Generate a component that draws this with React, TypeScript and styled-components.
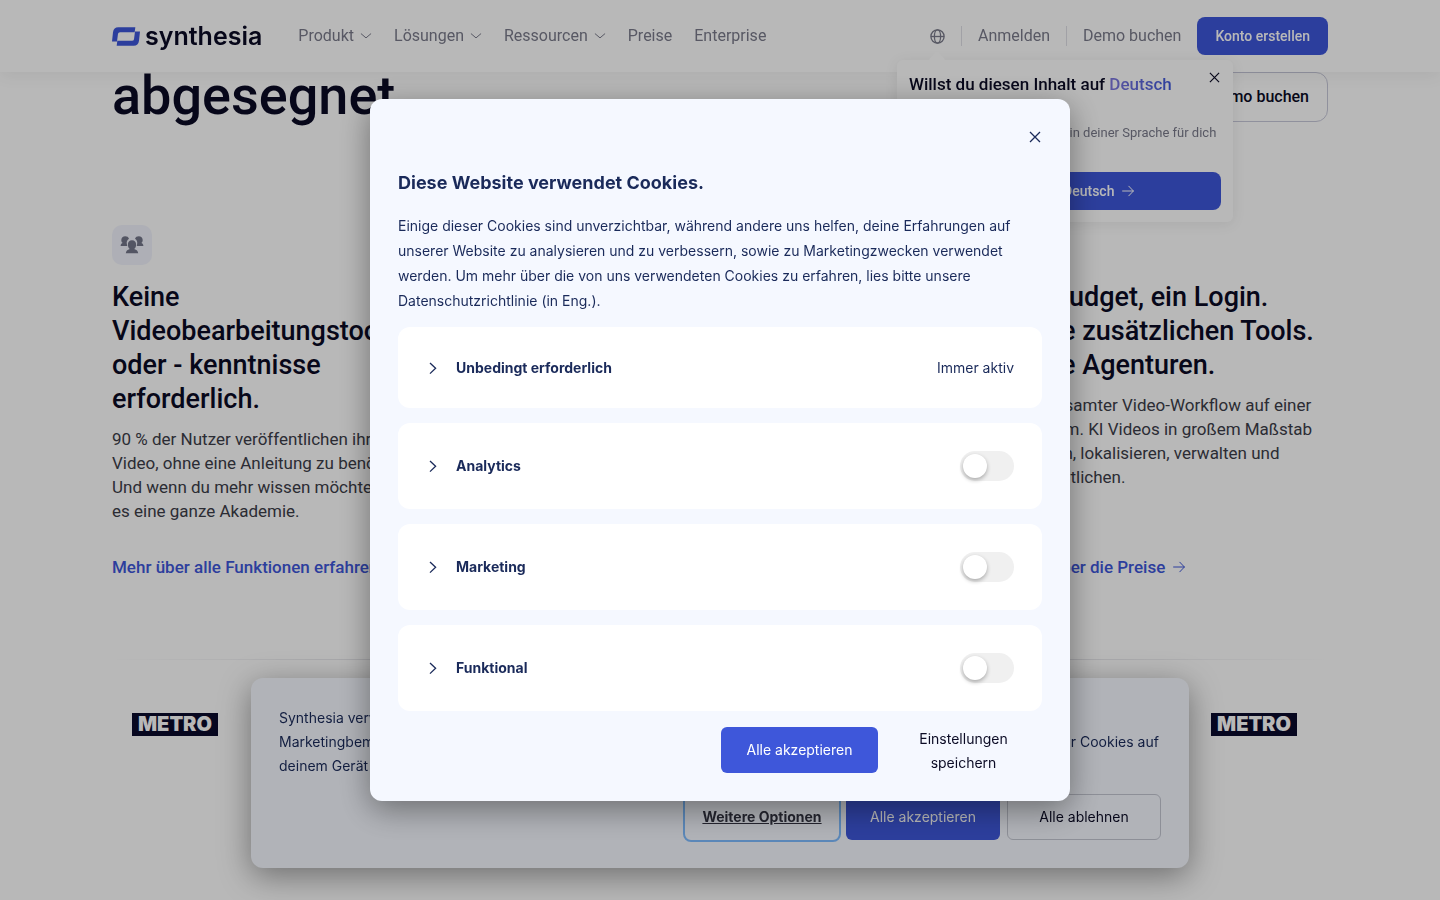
import React from "react";
import styled, { createGlobalStyle, css } from "styled-components";

const ui = `Roboto, "Liberation Sans", sans-serif`;
const inter = `Inter, "Liberation Sans", sans-serif`;

const color = {
  ink: "#0b0b25",
  text: "#3c3d49",
  muted: "#7a7b8b",
  navy: "#1a2a5a",
  blue: "#3e57da",
  panel: "#f5f8ff",
};

const GlobalStyle = createGlobalStyle`
  *, *::before, *::after { box-sizing: border-box; }
  body { margin: 0; background: #fff; font-family: ${ui}; color: ${color.ink}; overflow: hidden; }
  h1, h2, h3, p { margin: 0; }
  button { font-family: inherit; margin: 0; padding: 0; border: 0; background: none; cursor: pointer; }
  a { color: inherit; text-decoration: none; }
`;

/* ---------- header ---------- */

const Header = styled.header`
  position: fixed;
  inset: 0 0 auto;
  z-index: 2;
  height: 72px;
  padding: 0 112px;
  display: flex;
  align-items: center;
  background: #fff;
  box-shadow: 0 4px 16px rgba(0, 0, 0, 0.06);
`;

const Brand = styled.a`
  display: flex;
  align-items: center;
  gap: 5px;
  margin-right: 36px;
  font: 600 25px/32px ${inter};
  color: ${color.ink};
`;

const Nav = styled.nav`
  display: flex;
  align-items: center;
  gap: 22px;
  flex: 1;
`;

const navText = css`
  font: 400 16px/24px ${ui};
  color: ${color.muted};
  white-space: nowrap;
`;

const NavLink = styled.a`
  ${navText}
`;

const NavButton = styled.button`
  ${navText}
  display: flex;
  align-items: center;
  gap: 6px;
`;

const Account = styled.div`
  display: flex;
  align-items: center;
  gap: 16px;
`;

const Separator = styled.span`
  width: 1px;
  height: 20px;
  background: #e0e0e6;
`;

const LanguageAnchor = styled.div`
  position: relative;
  display: flex;
  color: ${color.muted};
`;

const IconButton = styled.button`
  display: flex;
  align-items: center;
  justify-content: center;
  color: inherit;
`;

const SignUp = styled.a`
  padding: 7px 18px;
  border-radius: 8px;
  background: ${color.blue};
  color: #fff;
  font: 500 14px/24px ${ui};
  white-space: nowrap;
`;

/* ---------- language popover ---------- */

const Popover = styled.div`
  position: absolute;
  top: 31px;
  left: -33px;
  width: 336px;
  padding: 12px;
  border-radius: 6px;
  background: #fff;
  box-shadow: 0 2px 14px rgba(0, 0, 0, 0.08);

  &::before {
    content: "";
    position: absolute;
    top: -6px;
    left: 34px;
    width: 12px;
    height: 12px;
    background: #fff;
    border-radius: 2px;
    transform: rotate(45deg);
  }
`;

const PopoverClose = styled(IconButton)`
  position: absolute;
  top: 10px;
  right: 10px;
  width: 16px;
  height: 16px;
  color: ${color.ink};
`;

const PopoverTitle = styled.p`
  font: 500 17px/24px ${ui};
  color: ${color.ink};
`;

const Language = styled.span`
  background: linear-gradient(90deg, #8078de, ${color.blue});
  -webkit-background-clip: text;
  background-clip: text;
  color: transparent;
`;

const PopoverText = styled.p`
  margin-top: 4px;
  font: 400 13px/18px ${ui};
  color: ${color.muted};
  white-space: nowrap;
`;

const PopoverAction = styled.button`
  display: flex;
  align-items: center;
  justify-content: center;
  gap: 8px;
  width: 100%;
  height: 38px;
  margin-top: 12px;
  border-radius: 8px;
  background: ${color.blue};
  color: #fff;
  font: 500 14px/24px ${ui};
`;

/* ---------- page ---------- */

const Main = styled.main`
  padding: 64px 112px 0;
`;

const Hero = styled.section`
  display: flex;
  justify-content: space-between;
  align-items: flex-start;
  height: 161px;
`;

const HeroTitle = styled.h1`
  font: 500 54px/64px ${ui};
  color: ${color.ink};
`;

const HeroLink = styled.a`
  margin-top: 8px;
  padding: 12px 18px;
  border: 1px solid #c8c9da;
  border-radius: 12px;
  font: 500 16px/24px ${ui};
  color: ${color.ink};
`;

const Features = styled.section`
  display: grid;
  grid-template-columns: repeat(2, minmax(0, 320px));
  justify-content: space-between;
`;

const Feature = styled.article`
  display: flex;
  flex-direction: column;
`;

const FeatureIcon = styled.span`
  display: flex;
  align-items: center;
  justify-content: center;
  width: 40px;
  height: 40px;
  margin-bottom: 15px;
  border-radius: 10px;
  background: #f1f3fc;
  color: #74768a;
`;

const FeatureTitle = styled.h3`
  margin-bottom: 11px;
  font: 500 27px/34px ${ui};
  color: ${color.ink};
`;

const FeatureText = styled.p`
  margin-bottom: 32px;
  font: 400 17px/24px ${ui};
  color: ${color.text};
  white-space: pre-line;
`;

const FeatureLink = styled.a`
  display: flex;
  align-items: center;
  gap: 8px;
  margin-top: auto;
  font: 500 17px/24px ${ui};
  color: ${color.blue};
  white-space: nowrap;
`;

const Rule = styled.hr`
  height: 1px;
  margin: 80px 0 53px;
  border: 0;
  background: linear-gradient(90deg, transparent, #dcdce2 30%, #dcdce2 70%, transparent);
`;

const Logos = styled.div`
  display: flex;
  justify-content: space-between;
  padding: 0 31px 0 20px;
`;

const MetroLogo = styled.span`
  padding: 0 6px;
  background: #0a0a2c;
  color: #fff;
  font: 900 20px/23px ${inter};
`;

/* ---------- cookie banner ---------- */

const Banner = styled.section`
  position: fixed;
  z-index: 3;
  bottom: 32px;
  left: 50%;
  width: 938px;
  max-width: calc(100% - 48px);
  transform: translateX(-50%);
  padding: 28px;
  border-radius: 12px;
  background: ${color.panel};
  box-shadow: 0 8px 32px rgba(0, 0, 0, 0.4);
  font: 400 14px/24px ${inter};
  color: ${color.navy};
`;

const BannerActions = styled.div`
  display: flex;
  justify-content: flex-end;
  gap: 7px;
  margin-top: 16px;
`;

const Action = styled.button<{ $kind?: "primary" | "outline" | "focused" | "plain"; $wide?: boolean }>`
  width: ${(p) => (p.$wide ? 157 : 154)}px;
  min-height: 46px;
  border-radius: 6px;
  font: 400 14px/24px ${inter};
  color: ${color.ink};

  ${(p) => p.$kind === "primary" && css`background: ${color.blue}; color: #fff;`}
  ${(p) => p.$kind === "outline" && css`border: 1px solid #c4c7d2;`}
  ${(p) => p.$kind === "plain" && css`padding: 0 24px;`}
  ${(p) =>
    p.$kind === "focused" &&
    css`
      outline: 2px solid #7fbcff;
      font-weight: 700;
      color: #333442;
      text-decoration: underline;
    `}
`;

/* ---------- preferences dialog ---------- */

const Backdrop = styled.div`
  position: fixed;
  inset: 0;
  z-index: 4;
  display: grid;
  place-items: center;
  background: rgba(0, 0, 0, 0.28);
`;

const Dialog = styled.section`
  width: 700px;
  max-width: calc(100% - 32px);
  padding: 24px 28px 26px;
  border-radius: 12px;
  background: ${color.panel};
  box-shadow: 0 8px 32px rgba(0, 0, 0, 0.4);
  font: 400 14px/25px ${inter};
  color: ${color.navy};
`;

const DialogClose = styled(IconButton)`
  width: 14px;
  height: 28px;
  margin-left: auto;
`;

const DialogTitle = styled.h2`
  margin: 18px 0 16px;
  font: 700 18px/28px ${inter};
`;

const Categories = styled.div`
  display: flex;
  flex-direction: column;
  gap: 15px;
  margin: 14px 0 16px;
`;

const Category = styled.div`
  display: flex;
  align-items: center;
  justify-content: space-between;
  min-height: 81px;
  padding: 28px;
  border-radius: 12px;
  background: #fff;
  line-height: 24px;
`;

const Disclosure = styled.button`
  display: flex;
  align-items: center;
  gap: 16px;
  font: 700 14px/24px ${inter};
  color: ${color.navy};
`;

const Toggle = styled.input`
  appearance: none;
  width: 54px;
  height: 30px;
  margin: 0;
  padding: 3px;
  border-radius: 15px;
  background: #f0f0f0;
  cursor: pointer;

  &::before {
    content: "";
    display: block;
    width: 24px;
    height: 24px;
    border-radius: 50%;
    background: #fff;
    box-shadow: 0 2px 4px rgba(0, 0, 0, 0.3);
  }

  &:checked {
    background: ${color.blue};
  }

  &:checked::before {
    margin-left: 24px;
  }
`;

const DialogActions = styled.div`
  display: flex;
  align-items: flex-start;
  justify-content: flex-end;
  gap: 7px;
`;

/* ---------- drawings ---------- */

const LogoMark = () => (
  <svg width="28" height="19" viewBox="0 0 84 56" fill={color.blue} aria-hidden="true">
    <path d="M0 43 L3 15 Q5 0 19 0 H70 L68 15 H24 Q19 15 18 20 L15 43 Z" />
    <path d="M84 13 L81 41 Q79 56 65 56 H14 L16 41 H60 Q65 41 66 36 L69 13 Z" />
  </svg>
);

const ChevronDown = () => (
  <svg width="12" height="6" viewBox="0 0 12 6" fill="none" stroke="currentColor" aria-hidden="true">
    <path d="M1.2 .8 L6 4.9 L10.800 .8" strokeLinecap="round" strokeLinejoin="round" />
  </svg>
);

const ChevronRight = () => (
  <svg width="14" height="14" viewBox="0 0 14 14" fill="none" stroke="currentColor" strokeWidth="1.300" aria-hidden="true">
    <path d="M4 2 L9.600 7.300 L4 12.600" />
  </svg>
);

const Globe = () => (
  <svg width="15" height="15" viewBox="0 0 15 15" fill="none" stroke="currentColor" strokeWidth="1.300" aria-hidden="true">
    <circle cx="7.500" cy="7.500" r="6.600" />
    <ellipse cx="7.500" cy="7.500" rx="3.100" ry="6.600" />
    <path d="M.9 7.500 H14.100" />
  </svg>
);

const Cross = ({ size = 12 }: { size?: number }) => (
  <svg width={size} height={size} viewBox="0 0 12 12" fill="none" stroke="currentColor" strokeWidth="1.300" aria-hidden="true">
    <path d="M1 1 L11 11 M11 1 L1 11" />
  </svg>
);

const Arrow = () => (
  <svg width="12" height="12" viewBox="0 0 12 12" fill="none" stroke="currentColor" strokeLinecap="round" strokeLinejoin="round" aria-hidden="true">
    <path d="M.6 6 H11.300 M6.800 1.200 L11.400 6 L6.800 10.800" />
  </svg>
);

const People = () => (
  <svg width="24" height="20" viewBox="0 0 24 20" fill="currentColor" aria-hidden="true">
    <path d="M5.200 1.200 C7 1.200 8.500 2 9 3.700 C7.200 4.800 6.300 6.800 6.900 9.300 L7.300 11 H.6 C.7 9.100 1.500 8.200 2.800 7.900 C1.600 7.200 1.300 6 1.300 4.900 C1.300 2.700 3 1.200 5.200 1.200Z" />
    <path d="M18.800 1.200 C17 1.200 15.500 2 15 3.700 C16.800 4.800 17.700 6.800 17.100 9.300 L16.700 11 H23.400 C23.300 9.100 22.500 8.200 21.200 7.900 C22.400 7.200 22.700 6 22.700 4.900 C22.700 2.700 21 1.200 18.800 1.200Z" />
    <path d="M12 5.200 C14.600 5.200 16.100 7 16.100 9.500 C16.100 11.700 15.400 13.100 14.200 14 C16.800 14.700 17.900 16 18.200 18.200 H5.800 C6.100 16 7.200 14.700 9.800 14 C8.600 13.100 7.900 11.700 7.900 9.500 C7.900 7 9.400 5.200 12 5.200Z" />
  </svg>
);

/* ---------- content ---------- */

const features = [
  {
    title: "Keine Videobearbeitungstools oder - kenntnisse erforderlich.",
    text: "90 % der Nutzer veröffentlichen ihr erstes\nVideo, ohne eine Anleitung zu benötigen.\nUnd wenn du mehr wissen möchtest, gibt\nes eine ganze Akademie.",
    link: "Mehr über alle Funktionen erfahren",
  },
  {
    title: "Ein Budget, ein Login. Keine zusätzlichen Tools. Keine Agenturen.",
    text: "Dein gesamter Video-Workflow auf einer\nPlattform. KI Videos in großem Maßstab\nerstellen, lokalisieren, verwalten und\nveröffentlichen.",
    link: "Mehr über die Preise",
  },
];

const optionalCategories = ["Analytics", "Marketing", "Funktional"];

export default function App() {
  return (
    <>
      <GlobalStyle />
      <Header>
        <Brand href="#">
          <LogoMark />
          synthesia
        </Brand>
        <Nav>
          {["Produkt", "Lösungen", "Ressourcen"].map((item) => (
            <NavButton key={item} type="button">
              {item}
              <ChevronDown />
            </NavButton>
          ))}
          <NavLink href="#">Preise</NavLink>
          <NavLink href="#">Enterprise</NavLink>
        </Nav>
        <Account>
          <LanguageAnchor>
            <IconButton type="button" aria-label="Sprache">
              <Globe />
            </IconButton>
            <Popover>
              <PopoverClose type="button" aria-label="Hinweis schließen">
                <Cross size={11} />
              </PopoverClose>
              <PopoverTitle>
                Willst du diesen Inhalt auf <Language>Deutsch</Language>
                <br />
                sehen?
              </PopoverTitle>
              <PopoverText>
                Wir haben den Text der Site in deiner Sprache für dich
                <br />
                übersetzt.
              </PopoverText>
              <PopoverAction type="button">
                Weiter auf Deutsch
                <Arrow />
              </PopoverAction>
            </Popover>
          </LanguageAnchor>
          <Separator />
          <NavLink href="#">Anmelden</NavLink>
          <Separator />
          <NavLink href="#">Demo buchen</NavLink>
          <SignUp href="#">Konto erstellen</SignUp>
        </Account>
      </Header>

      <Main>
        <Hero>
          <HeroTitle>abgesegnet</HeroTitle>
          <HeroLink href="#">Demo buchen</HeroLink>
        </Hero>
        <Features>
          {features.map((f) => (
            <Feature key={f.link}>
              <FeatureIcon>
                <People />
              </FeatureIcon>
              <FeatureTitle>{f.title}</FeatureTitle>
              <FeatureText>{f.text}</FeatureText>
              <FeatureLink href="#">
                {f.link}
                <Arrow />
              </FeatureLink>
            </Feature>
          ))}
        </Features>
        <Rule />
        <Logos>
          <MetroLogo>METRO</MetroLogo>
          <MetroLogo>METRO</MetroLogo>
        </Logos>
      </Main>

      <Banner aria-label="Cookie-Hinweis">
        <p>
          Synthesia verwendet Cookies, um die Nutzung der Website zu analysieren und unsere
          <br />
          Marketingbemühungen zu unterstützen. Mit einem Klick auf „Alle akzeptieren“ stimmst du auch der Speicherung unserer Cookies auf
          <br />
          deinem Gerät zu.
        </p>
        <BannerActions>
          <Action type="button" $kind="focused">Weitere Optionen</Action>
          <Action type="button" $kind="primary">Alle akzeptieren</Action>
          <Action type="button" $kind="outline">Alle ablehnen</Action>
        </BannerActions>
      </Banner>

      <Backdrop>
        <Dialog role="dialog" aria-modal="true" aria-labelledby="cookie-title">
          <DialogClose type="button" aria-label="Schließen">
            <Cross />
          </DialogClose>
          <DialogTitle id="cookie-title">Diese Website verwendet Cookies.</DialogTitle>
          <p>
            Einige dieser Cookies sind unverzichtbar, während andere uns helfen, deine Erfahrungen auf unserer Website
            zu analysieren und zu verbessern, sowie zu Marketingzwecken verwendet werden. Um mehr über die von uns
            verwendeten Cookies zu erfahren, lies bitte unsere Datenschutzrichtlinie (in Eng.).
          </p>
          <Categories>
            <Category>
              <Disclosure type="button" aria-expanded="false">
                <ChevronRight />
                Unbedingt erforderlich
              </Disclosure>
              <span>Immer aktiv</span>
            </Category>
            {optionalCategories.map((name) => (
              <Category key={name}>
                <Disclosure type="button" aria-expanded="false" id={`label-${name}`}>
                  <ChevronRight />
                  {name}
                </Disclosure>
                <Toggle type="checkbox" role="switch" aria-labelledby={`label-${name}`} />
              </Category>
            ))}
          </Categories>
          <DialogActions>
            <Action type="button" $kind="primary" $wide>Alle akzeptieren</Action>
            <Action type="button" $kind="plain" $wide>Einstellungen speichern</Action>
          </DialogActions>
        </Dialog>
      </Backdrop>
    </>
  );
}
